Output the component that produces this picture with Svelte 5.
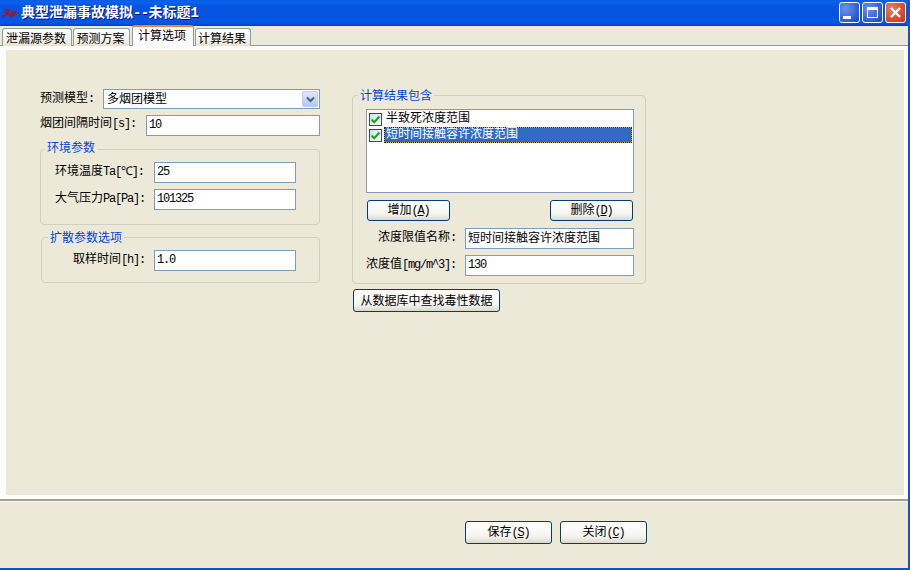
<script>
  const tabs = [
    { label: '泄漏源参数', w: 70 },
    { label: '预测方案', w: 57 },
    { label: '计算选项', w: 62, active: true },
    { label: '计算结果', w: 56 }
  ];
</script>

<div class="window">
  <header class="titlebar">
    <svg class="logo" width="16" height="9" viewBox="0 0 16 9">
      <path d="M0 8 L5 5 L3 3 M3 1 H8 L5 4 L9 7 M9 3 H15 L9 5 H14 L8 8" fill="none" stroke="#a81414" stroke-width="1.3"/>
    </svg>
    <span class="title">典型泄漏事故模拟<b>--</b>未标题<b>1</b></span>
    <div class="controls">
      <div class="ctl blue"><span class="min"></span></div>
      <div class="ctl blue"><span class="max"></span></div>
      <div class="ctl red">
        <svg width="13" height="13" viewBox="0 0 13 13"><path d="M2 2 L11 11 M11 2 L2 11" stroke="#fff" stroke-width="2.4"/></svg>
      </div>
    </div>
  </header>

  <nav class="tabs">
    {#each tabs as t}
      <div class="tab" class:active={t.active} style="width:{t.w}px">{t.label}</div>
    {/each}
  </nav>

  <main class="page">
    <div class="inner">
      <section class="left">
        <div class="row r1">
          <span class="lab">预测模型<m>:</m></span>
          <div class="select">
            <span class="seltxt">多烟团模型</span>
            <i class="drop">
              <svg width="9" height="7" viewBox="0 0 9 7"><path d="M1 1.5 L4.5 5 L8 1.5" fill="none" stroke="#4d6185" stroke-width="2"/></svg>
            </i>
          </div>
        </div>
        <div class="row r2">
          <span class="lab">烟团间隔时间<m>[s]:</m></span>
          <div class="input w174"><m>10</m></div>
        </div>

        <fieldset class="g env">
          <legend>环境参数</legend>
          <div class="gbody">
            <div class="row f1">
              <span class="lab">环境温度<m>Ta[℃]:</m></span>
              <div class="input w142"><m>25</m></div>
            </div>
            <div class="row f2">
              <span class="lab">大气压力<m>Pa[Pa]:</m></span>
              <div class="input w142"><m>101325</m></div>
            </div>
          </div>
        </fieldset>

        <fieldset class="g diff">
          <legend>扩散参数选项</legend>
          <div class="gbody">
            <div class="row f3">
              <span class="lab">取样时间<m>[h]:</m></span>
              <div class="input w142"><m>1.0</m></div>
            </div>
          </div>
        </fieldset>
      </section>

      <section class="right">
        <fieldset class="g res">
          <legend>计算结果包含</legend>
          <div class="gbody">
            <div class="list">
              <div class="item">
                <span class="check"><svg width="11" height="11" viewBox="0 0 11 11"><path d="M1.5 5.5 L4.2 8.2 L9.5 2.5" fill="none" stroke="#21a121" stroke-width="2.2"/></svg></span>
                <span class="txt">半致死浓度范围</span>
              </div>
              <div class="item">
                <span class="check"><svg width="11" height="11" viewBox="0 0 11 11"><path d="M1.5 5.5 L4.2 8.2 L9.5 2.5" fill="none" stroke="#21a121" stroke-width="2.2"/></svg></span>
                <span class="txt sel">短时间接触容许浓度范围</span>
              </div>
            </div>
            <div class="btnrow">
              <button class="btn b83">增加<m>(<u>A</u>)</m></button>
              <button class="btn b83">删除<m>(<u>D</u>)</m></button>
            </div>
            <div class="row f4">
              <span class="lab">浓度限值名称<m>:</m></span>
              <div class="input w169 cjk">短时间接触容许浓度范围</div>
            </div>
            <div class="row f5">
              <span class="lab">浓度值<m>[mg/m^3]:</m></span>
              <div class="input w169"><m>130</m></div>
            </div>
          </div>
        </fieldset>
        <button class="btn find">从数据库中查找毒性数据</button>
      </section>
    </div>
  </main>

  <footer class="foot">
    <button class="btn b87">保存<m>(<u>S</u>)</m></button>
    <button class="btn b87">关闭<m>(<u>C</u>)</m></button>
  </footer>
</div>

<style>
  :global(body) { margin: 0; background: #ece9d8; }
  * { box-sizing: border-box; }
  .window {
    width: 910px; height: 570px; display: flex; flex-direction: column;
    background: #ece9d8; border-right: 2px solid #0855dd; border-bottom: 2px solid #0855dd;
    font: 12px/16px "Noto Sans CJK SC", "Liberation Sans", sans-serif; color: #000;
    overflow: hidden;
  }
  :global(m) { font-family: "Liberation Mono", monospace; font-size: 12px; letter-spacing: -1.2px; }
  .titlebar {
    height: 26px; margin-right: -2px; flex: none; display: flex; align-items: center;
    padding-left: 2px;
    background: linear-gradient(#0a5ae0 0, #0a62ee 2px, #0556e4 6px, #0453dd 14px, #0557e8 21px, #0452d6 24px, #003dc0 26px);
  }
  .logo { flex: none; }
  .title { margin-left: 3px; padding-bottom: 2px; color: #fff; font-size: 14px; font-weight: 700; text-shadow: 1px 1px #0f1089; }
  .title b { font-family: "Liberation Mono", monospace; letter-spacing: -0.7px; }
  .controls { margin-left: auto; margin-right: 4px; display: flex; gap: 2px; padding-bottom: 1px; }
  .ctl {
    width: 21px; height: 21px; border: 1px solid #fff; border-radius: 3px;
    display: flex; align-items: center; justify-content: center;
  }
  .blue { background: radial-gradient(circle at 30% 30%, #6d92ee, #2d58d6 70%, #1c43c0); }
  .red { background: radial-gradient(circle at 30% 30%, #e5805f, #d9472a 65%, #b8341a); }
  .min { width: 8px; height: 3px; background: #fff; margin: 9px 5px 0 0; }
  .max { width: 11px; height: 11px; border: 1px solid #fff; border-top-width: 3px; }

  .tabs {
    height: 20px; flex: none; display: flex; align-items: flex-end; gap: 1px; padding-left: 2px;
    border-bottom: 1px solid #919b9c;
  }
  .tab {
    height: 18px; border: 1px solid #919b9c; border-bottom: 0; border-radius: 3px 3px 0 0;
    background: linear-gradient(#fff, #f3f1e8 70%, #e6e3d3);
    text-align: center; line-height: 17px; padding-right: 2px;
    margin-bottom: -1px;
  }
  .tab.active {
    height: 21px; background: #fcfcfe; border-top: 2px solid #e68b2c;
    line-height: 16px; z-index: 1; margin-left: 1px;
  }
  .page { height: 453px; flex: none; background: #fcfcfa; padding: 4px 4px 3px 6px; }
  .inner { height: 445px; background: #ece9d8; display: flex; align-items: flex-start; padding: 37px 0 0 34px; gap: 32px; }

  .left { width: 280px; flex: none; }
  .right { width: 294px; flex: none; }
  .row { display: flex; align-items: center; justify-content: space-between; height: 21px; }
  .lab { white-space: nowrap; padding-bottom: 4px; }
  .r1 .lab { padding-bottom: 2px; }
  .input {
    height: 21px; background: #fff; border: 1px solid #7f9db9; padding: 0 0 0 2px;
    line-height: 13px; white-space: nowrap;
  }
  .input.cjk { line-height: 15px; }
  .w174 { width: 174px; }
  .w142 { width: 142px; }
  .w169 { width: 169px; }
  .select {
    width: 217px; height: 20px; background: #fff; border: 1px solid #7f9db9; padding: 0 1px 0 3px;
    display: flex; justify-content: space-between; align-items: center;
  }
  .seltxt { padding-bottom: 2px; }
  .drop {
    width: 16px; height: 16px; border-radius: 2px;
    background: linear-gradient(#dfe8fb, #b4c8f6); border: 1px solid #bccdf5;
    display: flex; align-items: center; justify-content: center;
  }
  .row.r1 { height: 20px; margin-top: 2px; }
  .row.r2 { height: 20px; margin-top: 6px; }

  .g { margin: 0; border: 1px solid #d0d0bf; border-radius: 4px; padding: 0; min-width: 0; }
  legend { color: #0046d5; padding: 0 2px; line-height: 14px; }
  .env { margin-top: 7px; height: 83px; }
  .env legend { margin-left: 4px; padding-bottom: 4px; line-height: 10px; }
  .env .gbody { padding: 6px 23px 0 14px; }
  .env .f2 { margin-top: 6px; }
  .diff { margin: 5px 0 0 1px; height: 53px; }
  .diff legend { margin-left: 6px; }
  .diff .gbody { padding: 6px 23px 0 31px; }

  .res { height: 196px; margin-top: 1px; }
  .res legend { margin-left: 5px; }
  .res .gbody { padding: 7px 11px 0 13px; }
  .list { height: 84px; border: 1px solid #7f9db9; background: #fff; padding: 1px 1px 0 2px; }
  .item { height: 16px; display: flex; align-items: center; }
  .check {
    width: 13px; height: 13px; border: 1px solid #1c5180; background: linear-gradient(135deg, #dcdcd7, #fff);
    flex: none; display: flex; align-items: center; justify-content: center; margin-right: 2px;
  }
  .txt { height: 16px; border: 1px solid transparent; padding-left: 1px; white-space: nowrap; line-height: 10px; }
  .sel {
    flex: 1; color: #fff; border: 1px dotted #2a2000;
    background: linear-gradient(#316ac5, #316ac5) padding-box, #e8a838 border-box;
  }
  .btnrow { display: flex; justify-content: space-between; margin: 7px 1px 0 1px; }
  .btn {
    font: inherit; color: #000; padding: 0 0 2px; border: 1px solid #003c74; border-radius: 3px;
    background: linear-gradient(#fff, #f4f4ef 70%, #dcd8c8); white-space: nowrap; cursor: default;
  }
  .b83 { width: 83px; height: 21px; }
  .b87 { width: 87px; height: 23px; }
  .f4 { margin-top: 7px; padding-left: 12px; }
  .f5 { margin-top: 6px; }
  .find { width: 147px; height: 23px; margin: 5px 0 0 1px; display: block; }

  .foot {
    flex: 1; border-top: 2px solid #a3a293; box-shadow: inset 0 1px #f5f4ec;
    display: flex; gap: 8px; padding: 20px 0 0 465px; align-items: flex-start;
  }
</style>
